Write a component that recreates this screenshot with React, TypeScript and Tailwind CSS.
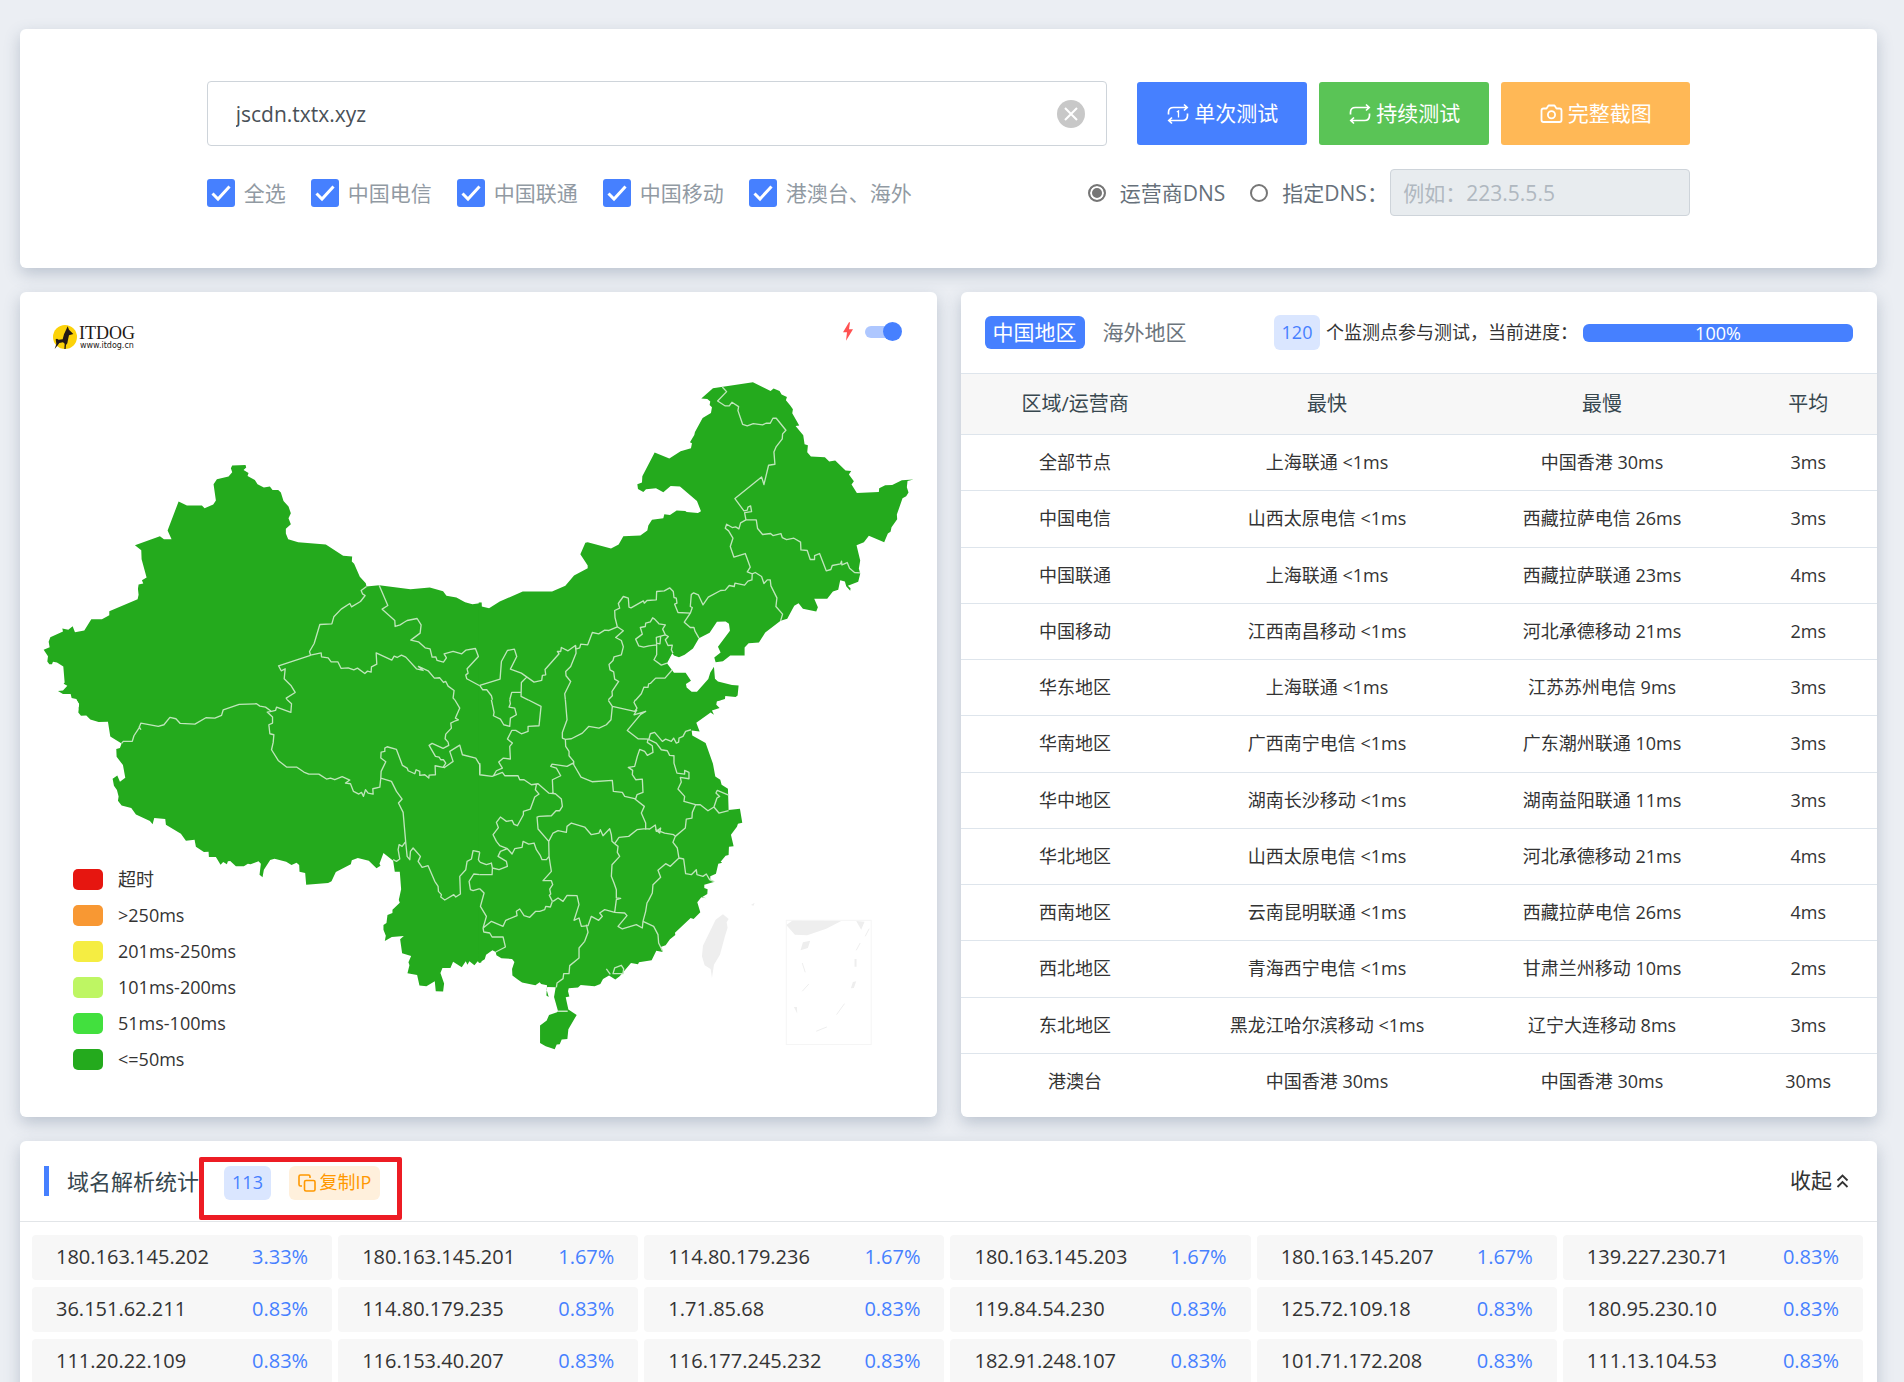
import React from "react";

const FONT = "font-['Open_Sans','Noto_Sans_CJK_SC',sans-serif]";

const ips: [string, string][] = [
  ["180.163.145.202", "3.33%"],
  ["180.163.145.201", "1.67%"],
  ["114.80.179.236", "1.67%"],
  ["180.163.145.203", "1.67%"],
  ["180.163.145.207", "1.67%"],
  ["139.227.230.71", "0.83%"],
  ["36.151.62.211", "0.83%"],
  ["114.80.179.235", "0.83%"],
  ["1.71.85.68", "0.83%"],
  ["119.84.54.230", "0.83%"],
  ["125.72.109.18", "0.83%"],
  ["180.95.230.10", "0.83%"],
  ["111.20.22.109", "0.83%"],
  ["116.153.40.207", "0.83%"],
  ["116.177.245.232", "0.83%"],
  ["182.91.248.107", "0.83%"],
  ["101.71.172.208", "0.83%"],
  ["111.13.104.53", "0.83%"],
];

const rows: [string, string, string, string][] = [
  ["全部节点", "上海联通 <1ms", "中国香港 30ms", "3ms"],
  ["中国电信", "山西太原电信 <1ms", "西藏拉萨电信 26ms", "3ms"],
  ["中国联通", "上海联通 <1ms", "西藏拉萨联通 23ms", "4ms"],
  ["中国移动", "江西南昌移动 <1ms", "河北承德移动 21ms", "2ms"],
  ["华东地区", "上海联通 <1ms", "江苏苏州电信 9ms", "3ms"],
  ["华南地区", "广西南宁电信 <1ms", "广东潮州联通 10ms", "3ms"],
  ["华中地区", "湖南长沙移动 <1ms", "湖南益阳联通 11ms", "3ms"],
  ["华北地区", "山西太原电信 <1ms", "河北承德移动 21ms", "4ms"],
  ["西南地区", "云南昆明联通 <1ms", "西藏拉萨电信 26ms", "4ms"],
  ["西北地区", "青海西宁电信 <1ms", "甘肃兰州移动 10ms", "2ms"],
  ["东北地区", "黑龙江哈尔滨移动 <1ms", "辽宁大连移动 8ms", "3ms"],
  ["港澳台", "中国香港 30ms", "中国香港 30ms", "30ms"],
];

const legend: [string, string][] = [
  ["bg-[#e61610]", "超时"],
  ["bg-[#f89833]", ">250ms"],
  ["bg-[#f5ed42]", "201ms-250ms"],
  ["bg-[#bef663]", "101ms-200ms"],
  ["bg-[#42e03e]", "51ms-100ms"],
  ["bg-[#24aa1d]", "<=50ms"],
];

const carriers = ["全选", "中国电信", "中国联通", "中国移动", "港澳台、海外"];

const CARD = "rounded-md bg-white shadow-[0_6px_16px_rgba(69,90,120,0.28)]";

/* The map is stored as four tiles; each has its land area and its province borders. */
const tiles = [
  {
    at: "translate(0 0)",
    land: "M1445 938L1440 940 1418 943 1396 937 1370 923 1340 918 1330 904 1290 893 1232 898 1138 886 1100 890 1098 880 1080 861 1063 822 1056 815 1057 800 1030 798 978 764 895 757 865 748 858 731 858 717 873 703 866 685 873 670 866 650 851 633 843 608 835 600 818 600 810 590 792 593 773 583 765 570 743 558 746 549 731 540 739 533 737 525 697 527 693 535 697 547 686 560 651 568 641 583 648 632 640 644 614 655 606 647 561 647 536 635 503 722 515 748 492 748 480 739 405 766 424 781 425 808 440 863 426 871 430 881 416 884 414 897 416 915 413 928 328 964 328 976 306 988 274 988 253 1022 225 1027 218 1009 205 1020 187 1016 189 1025 151 1042 146 1056 149 1072 131 1080 144 1099 142 1115 148 1123 156 1123 159 1116 171 1118 190 1130 194 1178 191 1182 202 1188 189 1202 174 1204 189 1213 212 1213 215 1225 229 1228 238 1243 236 1256 1445 1256Z",
    borders:
      "M1100 890L1084 902 1088 912 1096 917 1082 935 1055 951 1050 941 1024 958 1002 981 996 1002 960 1004 943 1061 929 1085 932 1096 964 1089 965 1101 985 1104 994 1116 1014 1116 1024 1136 1045 1134 1062 1140 1073 1135 1095 1151 1103 1144 1114 1147 1115 1131 1131 1123 1129 1089 1176 1111 1183 1099 1192 1103 1205 1096 1218 1102 1250 1137 1270 1142 1256 1130 1285 1143 1304 1165 1320 1164 1331 1178 1338 1175 1345 1189 1363 1202 1360 1225 1365 1230M932 1097L836 1128 844 1143 856 1137 853 1167 874 1188 886 1208 859 1225 862 1230M1138 886L1164 947 1147 958 1185 992 1186 1010 1201 1005 1212 998 1222 992 1252 986 1264 1005 1261 1030 1233 1051 1256 1056 1276 1074 1291 1077 1297 1102 1308 1101 1312 1112 1331 1117 1340 1104 1333 1092 1360 1085 1386 1092 1398 1081 1427 1076 1436 1100 1402 1137 1405 1150 1398 1156 1401 1167 1440 1188",
  },
  {
    at: "translate(1440 0)",
    land: "M-3 938L5 938 6 950 28 955 60 935 129 905 217 905 257 888 283 857 324 835 324 827 302 793 317 759 324 757 394 776 417 764 431 739 482 737 503 722 506 707 517 690 551 685 554 673 571 675 591 662 617 663 621 666 655 669 664 664 652 633 601 590 573 588 551 607 529 595 499 598 491 606 475 597 473 583 487 578 488 559 525 488 569 506 603 484 634 475 637 460 631 457 644 435 646 426 669 384 694 369 697 352 690 345 692 335 683 327 665 326 700 295 820 277 873 303 882 296 900 303 906 314 922 321 919 331 932 347 940 358 938 370 959 407 948 408 971 436 975 463 985 466 983 487 994 500 1036 502 1049 515 1067 512 1098 542 1115 543 1108 554 1123 574 1116 584 1132 609 1198 606 1199 595 1217 586 1238 585 1267 571 1302 569 1284 573 1282 592 1287 608 1280 619 1269 625 1252 674 1253 688 1236 712 1233 726 1225 731 1214 757 1168 738 1153 757 1131 766 1142 812 1138 836 1142 852 1136 876 1105 888 1113 895 1112 903 1100 889 1096 875 1082 871 1076 900 1060 905 1043 927 1004 927 1015 952 1010 965 970 957 957 940 944 948 923 987 903 993 857 1028 838 1058 807 1060 795 1073 795 1097 752 1097 730 1114 708 1117 704 1103 723 1088 715 1071 751 1023 748 1002 738 995 712 996 690 1029 658 1045 640 1076 615 1095 598 1102 583 1097 578 1090 562 1120 583 1149 618 1149 634 1173 619 1183 621 1193 636 1206 652 1206 686 1168 692 1148 703 1131 706 1167 715 1175 757 1186 777 1187 774 1217 768 1222 737 1219 736 1228 708 1236 -3 1236Z",
    borders:
      "M0 1187L61 1168 65 1115 83 1082 104 1078 111 1100 92 1138 125 1150 163 1177 186 1172 188 1157 198 1155 196 1139 238 1092 233 1085 243 1085 245 1073 265 1083 287 1067 288 1078 300 1074 303 1063 324 1065 338 1028 357 1032 375 1021 388 1022 413 1011M728 291L741 305 714 333 737 348 749 348 757 337 777 350 775 362 789 403 803 408 821 401 849 405 859 400 872 400 880 385 890 385 919 421 909 432 908 447 890 470 883 486 886 523 867 526 853 584 846 561 766 626 793 663 803 661 805 652 813 648 816 665 795 668 799 690 783 699 778 717 768 711 758 713 741 703 737 715 747 723 760 745 752 770 763 802 797 791 812 832 803 846 818 852 827 848 846 860 853 881 863 870 872 870 874 888 892 924 889 950 909 973 903 993M799 690L830 690 834 716 849 734 873 731 880 737 904 731 908 743 921 749 943 745 963 757 964 780 983 782 992 809 1005 809 1005 797 1020 791 1040 843 1054 839 1058 827 1083 822 1086 814 1087 825 1103 818 1110 835 1125 848 1142 849M818 852L817 870 805 874 795 886 766 880 764 890 749 887 737 901 723 902 686 922 670 945 656 915 642 909 635 914 632 950 638 953 632 970 614 997 632 1013 643 1013 646 1024 658 1045M632 970L595 968 585 943 592 940 590 925 583 923 581 905 570 894 554 903 531 905 530 930 502 932 494 940 491 933 454 954 448 952 446 925 431 920 416 941 420 955 405 962 406 983 413 1011 431 1023 408 1043 425 1052 431 1071 425 1095 403 1101 400 1112 388 1124 391 1140 402 1146 405 1168 417 1175 397 1205 398 1218 386 1230M519 984L525 988 538 1002 557 1005 549 1018 557 1035 530 1043 531 1065 508 1068 492 1072 477 1068 468 1048 488 1033 482 1013 497 1010 498 1000 512 996ZM557 1035L566 1040 557 1050 565 1067 578 1066 575 1080 580 1090M531 1065L531 1095 523 1110 545 1126 562 1120M543 1040L541 1062 531 1060M578 1140L556 1165 528 1165 512 1181 507 1182 505 1193 493 1192 485 1212 467 1232M288 1067L289 1090 273 1130 258 1145 259 1158 273 1175 255 1212 257 1230M141 1162L125 1178 124 1220 145 1230M124 1208L96 1208 90 1230M0 1187L9 1200 21 1200 35 1218 38 1230",
  },
  {
    at: "translate(0 1230)",
    land: "M1445 788L1440 790 1434 785 1424 797 1409 785 1403 795 1398 785 1386 803 1360 786 1352 805 1328 805 1322 820 1333 852 1330 876 1308 875 1305 845 1280 860 1259 858 1252 826 1223 821 1229 797 1226 788 1234 769 1207 761 1201 719 1212 709 1176 712 1155 724 1158 708 1151 690 1151 676 1160 670 1163 646 1178 640 1178 630 1200 609 1197 601 1204 569 1200 516 1185 516 1180 483 1151 460 1139 492 1142 498 1130 506 1107 483 1074 475 1056 482 1053 494 1008 517 995 545 985 550 919 555 916 520 899 516 898 496 890 489 875 496 859 486 824 477 811 481 792 510 788 533 779 525 783 492 776 485 752 494 744 492 732 500 708 500 691 484 684 485 681 494 670 487 662 495 648 472 627 472 626 456 612 457 588 441 584 420 558 423 543 402 498 375 496 358 463 355 458 374 450 364 408 344 394 325 365 317 354 303 356 290 351 271 342 258 338 237 352 227 360 246 376 234 369 196 350 171 349 148 360 145 365 131 331 110 324 66 296 67 271 59 259 47 243 48 235 38 238 12 231 0 1445 0Z",
    borders:
      "M365 131L370 125 397 125 402 108 417 85 423 70 475 80 492 75 510 53 528 57 541 71 585 73 618 54 645 55 665 47 670 30 718 14 770 12 780 19 797 22 815 35 827 32 830 22 873 38 875 12 862 0M417 80L423 90M815 35L802 37 818 52 818 70 807 75 810 102 822 105 820 128 815 150 835 182 860 202 890 202 912 217 927 223 957 223 980 238 992 235 1005 240 1027 231 1050 241 1037 250 1052 252 1061 275 1077 283 1085 278 1091 290 1097 270 1105 280 1120 283 1119 267 1140 262 1143 235 1144 215 1158 186 1143 175 1144 157 1155 155 1155 145 1162 141 1190 149 1208 197 1222 205 1225 213 1245 222 1249 210 1260 215 1260 227 1275 225 1287 235 1288 226 1307 225 1306 198 1330 203 1338 190 1331 180 1323 180 1318 172 1307 170 1288 137 1297 131 1330 146 1347 137 1345 127 1336 117 1338 103 1355 85 1353 70 1367 63 1376 60 1367 55 1380 25 1365 0M1332 205L1360 185 1350 155 1380 136 1388 165 1428 175 1440 195 1440 222M1143 235L1175 245 1190 275 1207 298 1196 310 1210 338 1218 430 1222 470 1230 480 1232 455 1240 445 1262 470 1255 485 1267 503 1285 498 1305 545 1315 560 1316 575 1325 585 1323 592 1335 601 1362 585 1368 592 1382 583 1380 530 1398 510 1402 485 1415 478 1420 453 1440 457M1218 425L1207 440 1198 435 1195 450 1200 478 1190 485 1180 480M1440 525L1422 523 1408 545 1412 570 1420 573 1440 567M1440 457L1436 480 1440 487",
  },
  {
    at: "translate(1440 1230)",
    land: "M-3 0L730 0 712 3 710 15 720 25 697 32 703 45 693 38 650 69 660 95 636 92 638 107 678 130 700 192 707 230 722 240 726 255 745 267 747 331 781 327 788 369 775 372 772 381 754 405 762 440 748 441 747 466 738 468 723 486 728 489 716 492 709 522 692 530 692 541 705 546 674 555 674 565 684 569 683 583 668 592 680 596 665 593 653 608 662 638 642 658 633 655 586 699 587 706 571 719 558 737 543 742 549 757 530 753 516 782 478 788 475 794 454 790 420 830 407 840 388 828 370 838 362 853 345 860 303 856 295 864 267 866 265 875 269 891 258 893 266 930 291 946 266 989 263 1018 246 1020 240 1034 231 1035 225 1049 198 1040 181 1030 181 978 201 963 208 946 232 938 235 935 223 892 228 863 203 862 200 868 207 892 200 888 202 857 184 853 180 848 167 857 127 849 114 840 98 828 97 808 104 787 97 778 65 776 50 767 48 757 38 752 19 765 15 779 -3 790Z",
    borders:
      "M386 2L398 20 465 35 472 25 463 8 467 0M472 30L463 45 498 35 483 44 443 92 475 117 508 118M257 0L262 60 248 98 248 115 257 119M145 0L184 20 178 78 145 80 145 95 125 102 108 92 96 92 83 118 98 130 90 140 92 178 71 175 57 187 68 205 50 213 41 228M90 0L92 12 88 22 105 25 110 45 92 55 90 80 72 75 62 58 41 48 43 38 35 0M0 190L0 225 37 230 68 218 75 228 115 228 120 240 133 240 155 255 175 252 207 280 227 282 245 298 248 320 240 333 229 333 215 348 178 350 172 352 175 388 207 425 208 470M170 255L167 270 178 283 165 292 152 328 131 335 131 345 113 378 103 374 97 362 80 365 62 352 50 368 56 384 40 405 50 425 60 438 83 447 97 463 105 447 127 443 130 425 147 433 163 430 170 450 182 468 187 480 200 480 208 470M220 282L218 240 243 228 230 205 213 200 217 193 262 200 280 190 284 198 304 232 337 246 398 242 401 275 428 278 435 290 465 297 494 320 485 340 498 370 498 390M257 119L258 140 268 155 268 168 282 185 282 195M257 119L275 117 308 100 327 80 358 85 380 75 394 60 398 20M468 297L472 285 490 278 488 238 468 240 458 225 459 212 446 203 465 200 473 170 480 149 495 155 503 167 520 158 518 138 503 128 505 118 530 130 545 150 563 153 570 167 583 168 583 190 592 220 615 223 615 212 628 218 628 237 602 233 605 247 595 268 615 290 613 305 648 315M508 118L512 102 525 98 548 125 558 118 575 125 582 115 590 130 597 127 598 115 610 110 618 95 634 90M648 315L662 315 685 333 703 322 718 340 747 333M703 322L712 295 720 290 709 280 713 272 747 286M648 315L638 338 637 355 620 358 617 385 587 410 580 428 593 445 598 475 612 478 618 522 635 525 650 510 652 525 670 530 680 523 690 540 703 546M207 425L220 400 235 393 260 398 262 380 275 370 315 382 335 405 358 400 362 390 370 408 390 387 395 405 397 425 405 432M405 432L418 413 447 410 472 390 498 387 510 388 527 376 530 395 543 385 540 400 528 390 555 400 582 405 587 410M405 432L415 440 413 458 420 470 397 495 395 530 403 550 410 570 410 595 423 596 410 600 405 638M598 475L572 500 558 492 535 512 543 533 520 555 518 580 508 600 502 610 498 635 490 665M405 638L435 640 442 648 415 680 428 688 470 675 488 685 490 665 522 680 535 705 537 730 549 755M405 638L375 630 360 640 368 650 357 662 335 650 325 678 305 680 298 655 283 662 298 615 292 588 262 587 250 605 235 595 220 605M208 470L211 490 215 515 190 543 215 543 219 555 210 568 213 583 209 587 218 605M218 605L212 622 198 620 195 630 180 635 168 635 150 653 133 648 120 628 110 635 112 648 78 662 70 680 35 665 10 685M320 675L325 698 315 725 298 745 298 775 270 798 268 822 252 822 250 837 232 850 230 863M10 685L12 697 30 700 37 712 70 712 77 742 48 757M83 447L62 455 55 470 80 485 83 500 58 510 38 505 37 525 0 525M38 505L35 490 20 495 0 487M0 567L13 580 2 620 20 650 10 685M380 808L392 824M400 822L405 805 425 797 432 808 430 822ZM235 935L264 935",
  },
];

function ChinaMap() {
  return (
    <svg viewBox="60 6 2751 2475" className="block w-full" role="img" aria-label="中国地图">
      {tiles.map((t) => (
        <path key={t.at} transform={t.at} d={t.land} fill="#24aa1d" />
      ))}
      {tiles.map((t) => (
        <path key={t.at} transform={t.at} d={t.borders} fill="none" stroke="#bfe6bb" strokeWidth="4" strokeLinejoin="round" />
      ))}
      <g transform="translate(1440 1230)" fill="#eeeeee">
        <path d="M730 644L747 658 741 668 744 684 736 710 721 765 703 795 697 835 693 808 675 797 667 770 670 738 708 660Z" />
        <path d="M814 616L825 609 822 618ZM920 676L940 662 1085 664 1040 687 983 707 946 705ZM1130 664L1155 666 1145 690ZM970 728L992 723 985 745 963 752ZM943 922L952 922 953 942ZM1130 845L1120 847 1114 866 1123 865ZM1125 778h6v23h-6Z" />
        <path d="M968 790L977 818M988 853L968 875M1042 982L1010 995M1095 912L1071 945M1142 730L1130 752M1169 687L1157 710" stroke="#eeeeee" strokeWidth="3" />
        <rect x="920" y="662" width="255" height="373" fill="none" stroke="#f5f5f5" strokeWidth="3" />
      </g>
    </svg>
  );
}

function Loop({ once }: { once?: boolean }) {
  return (
    <svg viewBox="0 0 24 24" className="size-6" fill="none" stroke="currentColor" strokeWidth="1.7" aria-hidden="true">
      <path d="M2.500 12.500V10.500Q2.500 5.500 7.500 5.500H21M18 2.500L21.200 5.500 18 8.500M21.500 11.500V13.500Q21.500 18.500 16.500 18.500H3M6 15.500L2.800 18.500 6 21.500" />
      {once && <path d="M10.800 10L12.500 9V15.500" strokeWidth="1.300" />}
    </svg>
  );
}

function Logo() {
  return (
    <div className="flex items-center gap-0.5 text-[#231815]">
      <svg viewBox="0 0 72 72" className="size-6" aria-hidden="true">
        <circle cx="36" cy="36" r="36" fill="#fcd209" />
        <path d="M44 4L48 14 61 27 48 31 45 44 43 55 39 60 38 72H34L35 56 30 52 19 54 13 62 5 72 10 57 8 43 12 41 17 44 29 43 33 28 40 13Z" fill="#231815" />
      </svg>
      <div className="font-['Liberation_Serif',serif]">
        <div className="text-[18px] leading-[18px]">ITDOG</div>
        <div className="pl-px font-['DejaVu_Sans',sans-serif] text-[8px] leading-[8px]">www.itdog.cn</div>
      </div>
    </div>
  );
}

function SearchCard() {
  return (
    <section className={`${CARD} pt-[52px] pb-[52px]`}>
      <div className="mx-[10%] px-px">
        <div className="flex items-center">
          <div className="relative flex-1">
            <input
              aria-label="域名"
              defaultValue="jscdn.txtx.xyz"
              className="h-[65px] w-full rounded border border-[#ced4da] px-7 text-[21px] text-[#495057] outline-none"
            />
            <button aria-label="清除" className="absolute top-[19px] right-[22px] flex size-7 items-center justify-center rounded-full bg-[#c8c8c8]">
              <svg viewBox="0 0 28 28" className="size-7" stroke="#fff" strokeWidth="2" aria-hidden="true">
                <path d="M8 8L20 20M20 8L8 20" />
              </svg>
            </button>
          </div>
          <div className="ml-[30px] flex gap-3 text-[21px] text-white">
            <button className="flex h-[63px] w-[170px] items-center justify-center gap-1 rounded-[3px] bg-[#4680ff]">
              <Loop once />
              单次测试
            </button>
            <button className="flex h-[63px] w-[170px] items-center justify-center gap-1 rounded-[3px] bg-[#5ac456]">
              <Loop />
              持续测试
            </button>
            <button className="flex h-[63px] w-[189px] items-center justify-center gap-1 rounded-[3px] bg-[#ffb856]">
              <svg viewBox="0 0 24 24" className="size-6" fill="none" stroke="currentColor" strokeWidth="1.8" aria-hidden="true">
                <path d="M3.500 6.500H6.500L8.500 3.500H14.500L16.500 6.500H19.500Q21.500 6.500 21.500 8.500V18Q21.500 20 19.500 20H3.500Q1.500 20 1.500 18V8.500Q1.500 6.500 3.500 6.500Z" strokeLinejoin="round" />
                <circle cx="11.500" cy="12.800" r="3.600" />
              </svg>
              完整截图
            </button>
          </div>
        </div>
        <div className="mt-[23px] flex h-[47px] items-center justify-between text-[21px] leading-[30px]">
          <div className="flex gap-[25px] text-[#919aa3]">
            {carriers.map((c) => (
              <label key={c} className="flex items-center gap-[9px]">
                <span className="relative flex size-7">
                  <input type="checkbox" defaultChecked className="size-7 appearance-none rounded-[3px] bg-[#4680ff]" />
                  <svg viewBox="0 0 28 28" className="pointer-events-none absolute inset-0 size-7" fill="none" stroke="#fff" strokeWidth="3" aria-hidden="true">
                    <path d="M5.500 14.500L11 20 22.500 7.500" />
                  </svg>
                </span>
                {c}
              </label>
            ))}
          </div>
          <div className="flex items-center text-[#66707a]">
            <label className="flex items-center gap-3.5">
              <input type="radio" name="dns" defaultChecked className="size-[18px] appearance-none rounded-full border-2 border-[#767676] bg-[#767676] shadow-[inset_0_0_0_2px_#fff]" />
              运营商DNS
            </label>
            <label className="ml-[25px] flex items-center gap-3.5">
              <input type="radio" name="dns" className="size-[18px] appearance-none rounded-full border-2 border-[#767676]" />
              <span className="w-[108px] whitespace-nowrap">指定DNS：</span>
            </label>
            <input
              aria-label="指定DNS"
              disabled
              placeholder="例如：223.5.5.5"
              className="h-[47px] w-[300px] rounded border border-[#ced4da] bg-[#e8ecef] px-3 text-[21px] placeholder:text-[#b0b8c0]"
            />
          </div>
        </div>
      </div>
    </section>
  );
}

function MapCard() {
  return (
    <section className={`${CARD} relative`}>
      <ChinaMap />
      <div className="absolute top-8 left-[33px]">
        <Logo />
      </div>
      <div className="absolute top-[30px] right-[35px] flex items-center gap-3">
        <svg viewBox="0 0 30 56" className="h-[19px] w-2.5" fill="#ff5252" aria-hidden="true">
          <path d="M18 0L0 30H12L9 56 30 21H18L21 0Z" />
        </svg>
        <button role="switch" aria-checked="true" aria-label="快速模式" className="flex h-[18px] w-[37px] items-center">
          <span className="h-3 w-[30px] rounded-full bg-[#aec7ff]" />
          <span className="-ml-3 size-[19px] shrink-0 rounded-full bg-[#4680ff]" />
        </button>
      </div>
      <ul className="absolute bottom-10 left-[53px] text-[18px] leading-9 text-[#333]">
        {legend.map(([color, label]) => (
          <li key={label} className="flex h-9 items-center gap-[15px]">
            <span className={`mt-0.5 h-[21px] w-[30px] rounded-[5px] ${color}`} />
            {label}
          </li>
        ))}
      </ul>
    </section>
  );
}

function StatsCard() {
  return (
    <section className={`${CARD} flex flex-col overflow-hidden`}>
      <div className="flex h-[81px] items-center justify-between px-6">
        <div className="flex items-center gap-2.5 text-[21px]">
          <button className="h-[33px] rounded-md bg-[#4680ff] px-2 leading-[33px] text-white">中国地区</button>
          <button className="h-[33px] px-2 leading-[33px] text-[#6c757d]">海外地区</button>
        </div>
        <div className="flex items-center text-[18px] text-[#333]">
          <span className="flex h-[35px] w-[46px] items-center justify-center rounded-md bg-[#dae6ff] text-[#4680ff]">120</span>
          <span className="ml-1.5 w-[257px] whitespace-nowrap">个监测点参与测试，当前进度：</span>
          <div role="progressbar" aria-valuenow={100} className="h-[18px] w-[270px] rounded-md bg-[#4680ff] text-center leading-[18px] text-white">
            100%
          </div>
        </div>
      </div>
      <div className="flex-1 pb-2">
        <table className="h-full w-full table-fixed text-center text-[18px] text-[#333]">
          <thead>
            <tr className="h-[61px] border-y border-[#dee5ec] bg-[#f7f7f7] text-[20px] text-[#37474f]">
              <th className="w-[25%] font-normal">区域/运营商</th>
              <th className="w-[30%] font-normal">最快</th>
              <th className="w-[30%] font-normal">最慢</th>
              <th className="w-[15%] font-normal">平均</th>
            </tr>
          </thead>
          <tbody>
            {rows.map((r) => (
              <tr key={r[0]} className="border-b border-[#dee5ec] last:border-b-0">
                {r.map((c, i) => (
                  <td key={i}>{c}</td>
                ))}
              </tr>
            ))}
          </tbody>
        </table>
      </div>
    </section>
  );
}

function DnsCard() {
  return (
    <section className={CARD}>
      <div className="flex h-[81px] items-center border-b border-[#e2e5e8] pr-7 pl-6">
        <span className="h-[30px] w-[5px] bg-[#4680ff]" />
        <h2 className="ml-[18px] text-[22px] leading-[30px] text-[#37474f]">域名解析统计</h2>
        <div className="relative mt-1 ml-[25px] flex items-center gap-[18px] text-[18px]">
          <span className="flex h-[34px] w-[47px] items-center justify-center rounded-md bg-[#dae6ff] text-[#4680ff]">113</span>
          <button className="flex h-[34px] w-[91px] items-center justify-center gap-1 rounded-md bg-[#fff0dc] text-[#ff9800]">
            <svg viewBox="0 0 18 18" className="size-[18px]" fill="none" stroke="currentColor" strokeWidth="1.600" aria-hidden="true">
              <rect x="6.500" y="6.500" width="10.500" height="10.500" rx="1.500" />
              <path d="M4 12H2.500Q1 12 1 10.500V2.500Q1 1 2.500 1H10.500Q12 1 12 2.500V4" />
            </svg>
            <span className="whitespace-nowrap">复制IP</span>
          </button>
          <span className="pointer-events-none absolute -top-[9px] -right-[22px] -bottom-5 -left-[25px] rounded-[2px] border-5 border-[#ed1c24]" />
        </div>
        <button className="ml-auto flex items-center gap-1 text-[21px] text-[#333]">
          收起
          <svg viewBox="0 0 13 14" className="h-3.5 w-[13px]" fill="none" stroke="currentColor" strokeWidth="1.800" aria-hidden="true">
            <path d="M1.500 6.500L6.500 1.500 11.500 6.500M1.500 13L6.500 8 11.500 13" />
          </svg>
        </button>
      </div>
      <ul className="grid grid-cols-6 gap-x-1.5 gap-y-[7px] pt-[13px] pr-3.5 pb-3 pl-3 text-[20px]">
        {ips.map(([ip, pct]) => (
          <li key={ip} className="flex h-[45px] items-center justify-between rounded bg-[#f7f7f7] px-6 text-[#333]">
            <span>{ip}</span>
            <span className="text-[#4680ff]">{pct}</span>
          </li>
        ))}
      </ul>
    </section>
  );
}

export default function App() {
  return (
    <main className={`${FONT} h-screen overflow-hidden bg-[#ebeef3] pt-[29px] pr-[27px] pl-5`}>
      <div className="flex flex-col gap-6">
        <SearchCard />
        <div className="grid grid-cols-2 gap-6">
          <MapCard />
          <StatsCard />
        </div>
        <DnsCard />
      </div>
    </main>
  );
}
